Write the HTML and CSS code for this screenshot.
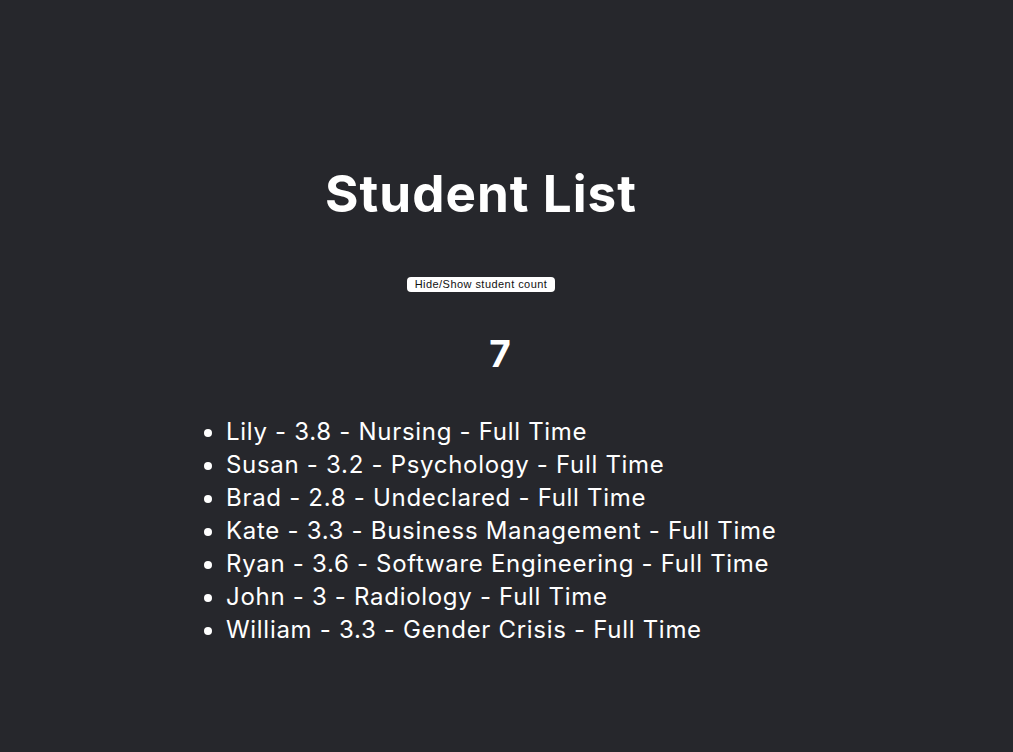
FILE: index.html
```html
<!DOCTYPE html>
<html lang="en">
<head>
<meta charset="utf-8">
<title>Student List</title>
<link rel="stylesheet" href="styles.css">
</head>
<body>
<div class="app">
  <h1 class="title">Student List</h1>
  <button class="toggle" type="button">Hide/Show student count</button>
  <h2 class="count">7</h2>
  <ul class="students">
    <li>Lily - 3.8 - Nursing - Full Time</li>
    <li>Susan - 3.2 - Psychology - Full Time</li>
    <li>Brad - 2.8 - Undeclared - Full Time</li>
    <li>Kate - 3.3 - Business Management - Full Time</li>
    <li>Ryan - 3.6 - Software Engineering - Full Time</li>
    <li>John - 3 - Radiology - Full Time</li>
    <li>William - 3.3 - Gender Crisis - Full Time</li>
  </ul>
</div>
</body>
</html>
```
FILE: styles.css
```css
html, body {
  margin: 0;
  padding: 0;
}
body {
  background: #26272c;
  color: #ffffff;
  font-family: Inter, "Noto Sans", sans-serif;
  min-height: 100vh;
}
.app {
  width: 962px;
  padding-top: 162px;
  text-align: center;
  display: flex;
  flex-direction: column;
  align-items: center;
}
.title {
  margin: 0;
  font-size: 51.2px;
  line-height: 62px;
  font-weight: 700;
  letter-spacing: 1px;
}
.toggle {
  margin-top: 53px;
  height: 15px;
  padding: 0 8px;
  border: none;
  border-radius: 4px;
  background: #ffffff;
  color: #111;
  font-family: "Liberation Sans", Arial, sans-serif;
  font-size: 11px;
  line-height: 15px;
  letter-spacing: 0.45px;
}
.count {
  margin: 39px 0 0 38px;
  font-size: 37px;
  line-height: 45px;
  font-weight: 700;
}
.students {
  align-self: flex-start;
  margin: 39px 0 0 186px;
  padding-left: 40px;
  text-align: left;
  font-size: 24px;
  line-height: 33px;
  letter-spacing: 0.7px;
}
```
